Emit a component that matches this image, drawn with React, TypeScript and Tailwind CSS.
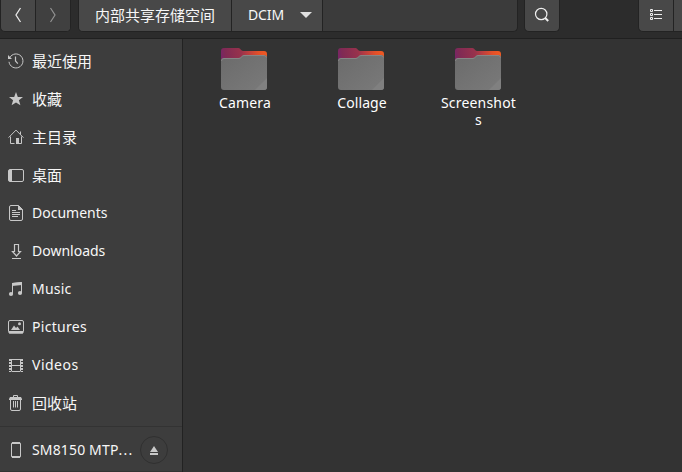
import type { ReactNode } from "react";

const line = { fill: "none", stroke: "#c8c8c8", strokeWidth: 1 } as const;

function Icon({ children }: { children: ReactNode }) {
  return (
    <svg width="16" height="16" viewBox="0 0 16 16" className="shrink-0">
      {children}
    </svg>
  );
}

const cjk = "text-[15px]";

const places: { name: string; text: string; icon: ReactNode }[] = [
  {
    name: "最近使用",
    text: cjk,
    icon: (
      <>
        <path {...line} d="M1.8 4.6A7 7 0 1 1 1 8.8" />
        <path d="M0 2v4h4z" fill="#c8c8c8" />
        <path {...line} strokeWidth="1.2" d="M7.5 3.5V8l2.3 2.7" />
      </>
    ),
  },
  {
    name: "收藏",
    text: cjk,
    icon: <path d="M8 1l1.8 4.9 5.2.1-4.1 3.2 1.5 5L8 11.4l-4.4 2.8 1.5-5L1 6l5.2-.1z" fill="#c8c8c8" />,
  },
  {
    name: "主目录",
    text: cjk,
    icon: (
      <>
        <path {...line} d="M.6 8.6L8 1.1l7.4 7.5M12.5 5.3V2.5M2.5 7.5v7h4M9.5 14.5h4v-7" />
        <path d="M8 9h3v6H8z" fill="#c8c8c8" />
      </>
    ),
  },
  {
    name: "桌面",
    text: cjk,
    icon: (
      <>
        <rect {...line} x=".5" y="2.5" width="15" height="12" rx="1.5" />
        <path d="M1 3h3v11H1z" fill="#c8c8c8" />
      </>
    ),
  },
  {
    name: "Documents",
    text: "mb-[2px]",
    icon: (
      <>
        <path {...line} d="M3 .5h7.5l4 4V14a1.5 1.5 0 0 1-1.5 1.5H3A1.5 1.5 0 0 1 1.5 14V2A1.5 1.5 0 0 1 3 .5z" />
        <path d="M10 0l5 5h-5z" fill="#c8c8c8" />
        <path {...line} d="M4 5.5h4M4 7.5h8M4 9.5h8M4 11.5h6" />
      </>
    ),
  },
  {
    name: "Downloads",
    text: "mb-[2px]",
    icon: <path {...line} strokeWidth="1.2" d="M6.5 1.5h4v7h2L8.5 13l-4-4.5h2zM4 15.5h9" />,
  },
  {
    name: "Music",
    text: "mb-[2px] tracking-[0.2px]",
    icon: (
      <>
        <path {...line} d="M4.5 13V2.5l9-1V12" />
        <path d="M4 2l10-1v3L4 5z" fill="#c8c8c8" />
        <ellipse cx="3" cy="13" rx="2.1" ry="1.9" fill="#c8c8c8" />
        <ellipse cx="12" cy="12" rx="2.1" ry="1.9" fill="#c8c8c8" />
      </>
    ),
  },
  {
    name: "Pictures",
    text: "mb-[2px] tracking-[0.3px]",
    icon: (
      <>
        <rect {...line} x=".5" y="1.5" width="15" height="12.5" rx="1.5" />
        <path d="M1 12h14v2.5H1zM3 11l3-4.5L8 9l1.5-1.5L12 11z" fill="#c8c8c8" />
        <circle cx="11.5" cy="4.7" r="1.5" fill="#c8c8c8" />
      </>
    ),
  },
  {
    name: "Videos",
    text: "mb-[2px] tracking-[0.5px]",
    icon: (
      <>
        <path {...line} d="M3.5 2v12M12.5 2v12M3.5 2.5h9M3.5 8.5h9M3.5 14.5h9" />
        <path stroke="#c8c8c8" strokeWidth="2" strokeDasharray="2 1" d="M2 2V15M14 2V15" />
      </>
    ),
  },
  {
    name: "回收站",
    text: cjk,
    icon: (
      <>
        <path {...line} d="M5.5 2V.5h4V2M2.5 4.5V14a1.5 1.5 0 0 0 1.5 1.5h7a1.5 1.5 0 0 0 1.5-1.5V4.5M5.5 6v6.5M7.5 6v6.5M9.5 6v6.5" />
        <path d="M2 2h11l1 2v1H1V4z" fill="#c8c8c8" />
      </>
    ),
  },
];

function Folder({ name, label }: { name: string; label: string }) {
  return (
    <div className="flex w-[117px] flex-col items-center">
      <svg width="48" height="44" viewBox="0 0 48 44" className="mr-px">
        <defs>
          <linearGradient id="tab" gradientUnits="userSpaceOnUse" x1="1" y1="14" x2="47" y2="6">
            <stop offset="0" stopColor="#77246a" />
            <stop offset=".12" stopColor="#802a54" />
            <stop offset=".45" stopColor="#98324c" />
            <stop offset=".6" stopColor="#b93d40" />
            <stop offset=".82" stopColor="#e25029" />
            <stop offset="1" stopColor="#f05a22" />
          </linearGradient>
          <linearGradient id="front" x1="0" y1="0" x2="1" y2="1">
            <stop offset="0" stopColor="#6b6b6b" />
            <stop offset="1" stopColor="#7a7a7a" />
          </linearGradient>
        </defs>
        <path d="M4 1h14.500c2 0 2.500 3 4.500 3h21a3 3 0 0 1 3 3v11H1V4a3 3 0 0 1 3-3z" fill="url(#tab)" />
        <path d="M4 11h15c2 0 3-3 5-3h20a3 3 0 0 1 3 3v29a3 3 0 0 1-3 3H4a3 3 0 0 1-3-3V14a3 3 0 0 1 3-3z" fill="url(#front)" />
        <path d="M47 31v9a3 3 0 0 1-3 3H35z" fill="#808080" />
        <path d="M1.500 14a2.500 2.500 0 0 1 2.500-2.500h15c2 0 3-3 5-3h20a3 3 0 0 1 2.500 2" fill="none" stroke="#868686" />
      </svg>
      <div className={`mt-[3px] w-[78px] text-center text-[14px] leading-[17px] break-all text-white ${label}`}>{name}</div>
    </div>
  );
}

export default function App() {
  return (
    <div className="flex h-[472px] w-[682px] flex-col overflow-hidden bg-[#333333] font-['Noto_Sans','Noto_Sans_CJK_SC',sans-serif] text-[14px] text-[#f7f7f7]">
      <header className="flex h-[39px] shrink-0 items-start border-b border-[#202020] bg-[#2c2c2c]">
        <div className="flex h-8 w-[71px] shrink-0 rounded-b-[5px] border border-t-0 border-[#232323] bg-[#484848]">
          <div className="flex w-[35px] items-center justify-center border-r border-[#232323] pr-px pb-px">
            <svg width="8" height="16" viewBox="0 0 8 16"><path d="M6.500 1L2 8l4.500 7" fill="none" stroke="#e9e9e9" strokeWidth="1.300" /></svg>
          </div>
          <div className="flex flex-1 items-center justify-center rounded-br-[4px] bg-[#404040] pb-px">
            <svg width="8" height="16" viewBox="0 0 8 16"><path d="M1.500 1L6 8l-4.500 7" fill="none" stroke="#929292" strokeWidth="1.200" /></svg>
          </div>
        </div>
        <div className="ml-[7px] flex h-8 w-[440px] shrink-0 overflow-hidden rounded-b-[5px] border border-t-0 border-[#232323] bg-[#3b3b3b]">
          <div className="flex w-[153px] shrink-0 items-center border-r border-[#232323] bg-[#484848] pl-4 text-[15px] whitespace-nowrap">内部共享存储空间</div>
          <div className="flex w-[91px] shrink-0 items-center border-r border-[#232323] bg-[#484848] pb-px pl-4">
            <span className="mb-px w-[52px] tracking-[-0.1px]">DCIM</span>
            <svg width="12" height="6" viewBox="0 0 12 6"><path d="M0 0h12L6 6z" fill="#e0e0e0" /></svg>
          </div>
        </div>
        <div className="ml-[6px] flex h-8 w-9 shrink-0 items-center justify-center rounded-b-[5px] border border-t-0 border-[#232323] bg-[#484848]">
          <svg width="16" height="16" viewBox="0 0 16 16" className="mt-[-1px]"><circle cx="7.200" cy="7" r="5.700" fill="none" stroke="#eeeeee" strokeWidth="1.200" /><path d="M11.200 11l3 3" stroke="#eeeeee" strokeWidth="2" /></svg>
        </div>
        <div className="ml-[78px] flex h-8 w-[60px] shrink-0 rounded-bl-[5px] border border-t-0 border-[#232323] bg-[#484848]">
          <div className="flex w-[35px] items-center border-r border-[#232323] pb-[2px] pl-[11px]">
            <svg width="12" height="11" viewBox="0 0 12 11" fill="none" stroke="#eeeeee">
              <path d="M.5 .5h2v2h-2zM.5 4.500h2v2h-2zM.5 8.500h2v2h-2z" />
              <path d="M4 1.500h8M4 5.500h8M4 9.500h8" />
            </svg>
          </div>
        </div>
      </header>
      <div className="flex flex-1">
        <aside className="flex w-[183px] shrink-0 flex-col border-r border-[#222222] bg-[#3d3d3d]">
          <nav className="flex h-[387px] flex-col pt-[3px]">
            {places.map((p) => (
              <div key={p.name} className="flex h-[38px] items-center gap-2 pl-2">
                <Icon>{p.icon}</Icon>
                <span className={p.text}>{p.name}</span>
              </div>
            ))}
          </nav>
          <div className="flex h-[45px] items-center border-t border-[#333333] pt-[2px] pl-2">
            <Icon><path {...line} d="M4 1h8M4 15h8" strokeWidth="2" /><rect {...line} x="3.500" y=".5" width="9" height="15" rx="1.500" /></Icon>
            <span className="mb-[2px] ml-2 w-[108px] tracking-[0.15px] whitespace-nowrap">SM8150 MTP<span className="tracking-[1.300px]">...</span></span>
            <div className="flex h-7 w-7 items-center justify-center rounded-full border border-[#303030]">
              <svg width="8" height="9" viewBox="0 0 8 9"><path d="M4 0l4 6H0zM0 7h8v2H0z" fill="#c8c8c8" /></svg>
            </div>
          </div>
          <div className="h-px bg-[#333333]" />
        </aside>
        <main className="flex flex-1 items-start pt-2 pl-[3px]">
          <Folder name="Camera" label="pl-px tracking-[0.2px]" />
          <Folder name="Collage" label="pl-px tracking-[0.1px]" />
          <Folder name="Screenshots" label="tracking-[0.2px]" />
        </main>
      </div>
    </div>
  );
}
